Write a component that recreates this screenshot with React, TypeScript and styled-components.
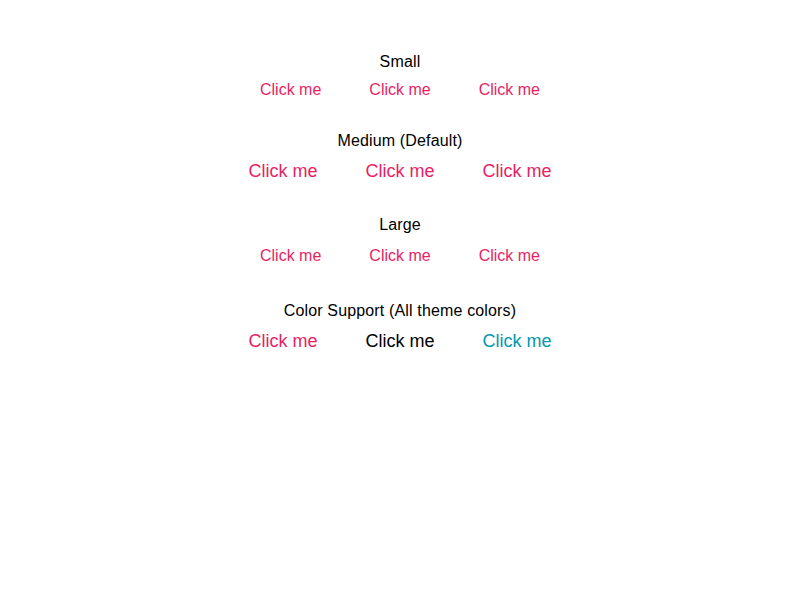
import React from "react";
import styled, { createGlobalStyle } from "styled-components";

const GlobalStyle = createGlobalStyle`
  html, body { margin: 0; padding: 0; background: #ffffff; }
  body { font-family: "Liberation Sans", Arial, sans-serif; color: #000; }
`;

type Size = "small" | "medium" | "large";
type Tone = "primary" | "default" | "secondary";

const sizeStyles: Record<Size, { font: number; line: number; padY: number }> = {
  small: { font: 16, line: 19, padY: 4 },
  medium: { font: 18, line: 22, padY: 5 },
  large: { font: 16, line: 20, padY: 7 },
};

const toneColors: Record<Tone, string> = {
  primary: "#e91e63",
  default: "#000000",
  secondary: "#0099ae",
};

const Page = styled.main`
  display: flex;
  flex-direction: column;
  align-items: center;
  gap: 28px;
  padding-top: 52px;
`;

const Section = styled.section`
  display: flex;
  flex-direction: column;
  align-items: center;
  gap: 4px;
`;

const Heading = styled.div`
  font-size: 16px;
  line-height: 20px;
  letter-spacing: 0.15px;
  color: #000;
`;

const Row = styled.div`
  display: flex;
  gap: 16px;
`;

const TextButton = styled.button<{ $size: Size; $tone: Tone }>`
  appearance: none;
  border: none;
  background: transparent;
  cursor: pointer;
  font-family: "Liberation Sans", Arial, sans-serif;
  font-size: ${(p) => sizeStyles[p.$size].font}px;
  line-height: ${(p) => sizeStyles[p.$size].line}px;
  padding: ${(p) => sizeStyles[p.$size].padY}px 16px;
  color: ${(p) => toneColors[p.$tone]};
  white-space: nowrap;
`;

const sections: { title: string; size: Size; tones: Tone[] }[] = [
  { title: "Small", size: "small", tones: ["primary", "primary", "primary"] },
  { title: "Medium (Default)", size: "medium", tones: ["primary", "primary", "primary"] },
  { title: "Large", size: "large", tones: ["primary", "primary", "primary"] },
  { title: "Color Support (All theme colors)", size: "medium", tones: ["primary", "default", "secondary"] },
];

export default function App() {
  return (
    <>
      <GlobalStyle />
      <Page>
        {sections.map((s) => (
          <Section key={s.title}>
            <Heading>{s.title}</Heading>
            <Row>
              {s.tones.map((t, i) => (
                <TextButton key={i} $size={s.size} $tone={t}>
                  Click me
                </TextButton>
              ))}
            </Row>
          </Section>
        ))}
      </Page>
    </>
  );
}
